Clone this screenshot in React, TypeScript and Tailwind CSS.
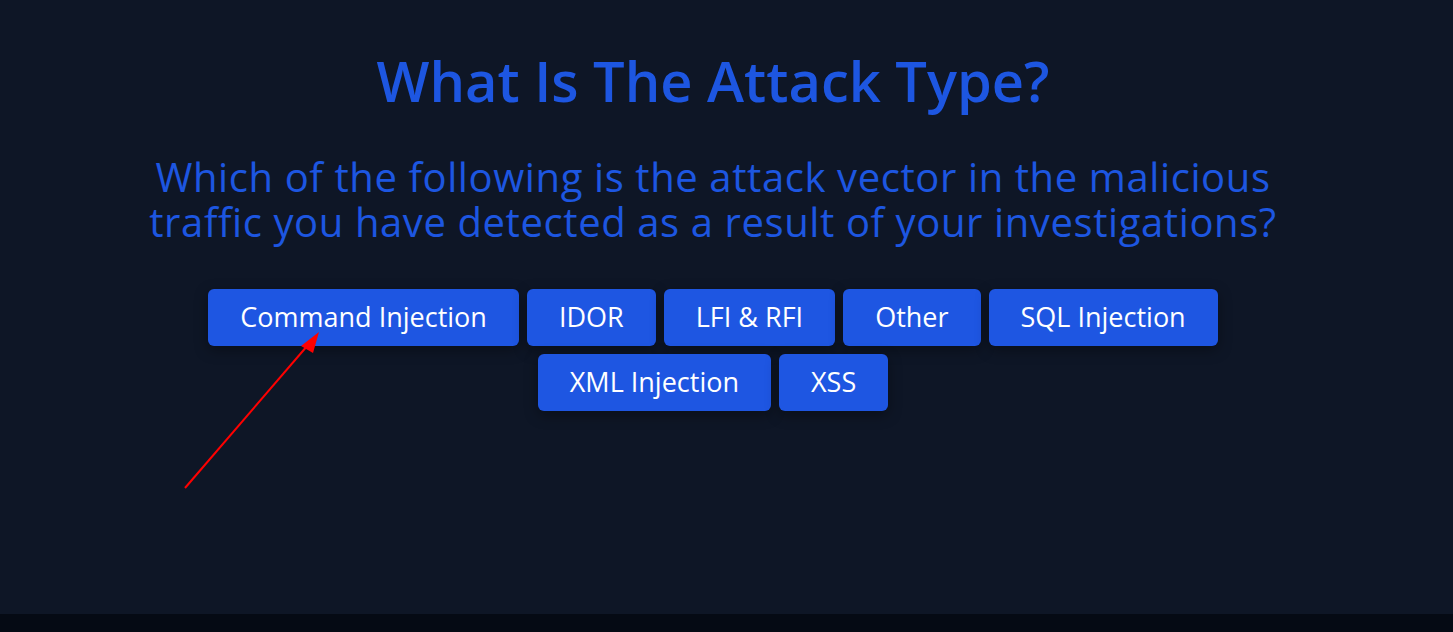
import React from 'react'

const options = [
  'Command Injection',
  'IDOR',
  'LFI & RFI',
  'Other',
  'SQL Injection',
  'XML Injection',
  'XSS',
]

export default function App() {
  return (
    <div
      className="relative w-[1453px] h-[632px] flex flex-col bg-[#0e1626] overflow-hidden"
      style={{ fontFamily: '"Open Sans", "Noto Sans", sans-serif' }}
    >
      <main className="flex-1 flex flex-col items-center pt-[48px] pr-[27px]">
        <h1 className="text-[56px] leading-[64px] font-semibold text-[#1d56e1]">
          What Is The Attack Type?
        </h1>

        <p className="mt-[42px] max-w-[1150px] text-center text-[40px] leading-[45px] tracking-[0.6px] text-[#1d56e1]">
          Which of the following is the attack vector in the malicious traffic you have detected as a
          result of your investigations?
        </p>

        <div className="mt-[45px] max-w-[1040px] flex flex-wrap justify-center gap-2">
          {options.map((o) => (
            <button
              key={o}
              className="h-[57px] px-8 rounded-md bg-[#1e56e2] text-white text-[27px] shadow-[0_4px_14px_rgba(0,0,0,0.35)]"
            >
              {o}
            </button>
          ))}
        </div>
      </main>

      <footer className="h-[18px] bg-[#050a14]" />

      {/* annotation arrow */}
      <svg className="absolute left-0 top-0 pointer-events-none" width="1453" height="632">
        <line x1="185" y1="488" x2="308" y2="345" stroke="#f00" strokeWidth="2" />
        <polygon points="319,332 301,346 313,353" fill="#f00" />
      </svg>
    </div>
  )
}
